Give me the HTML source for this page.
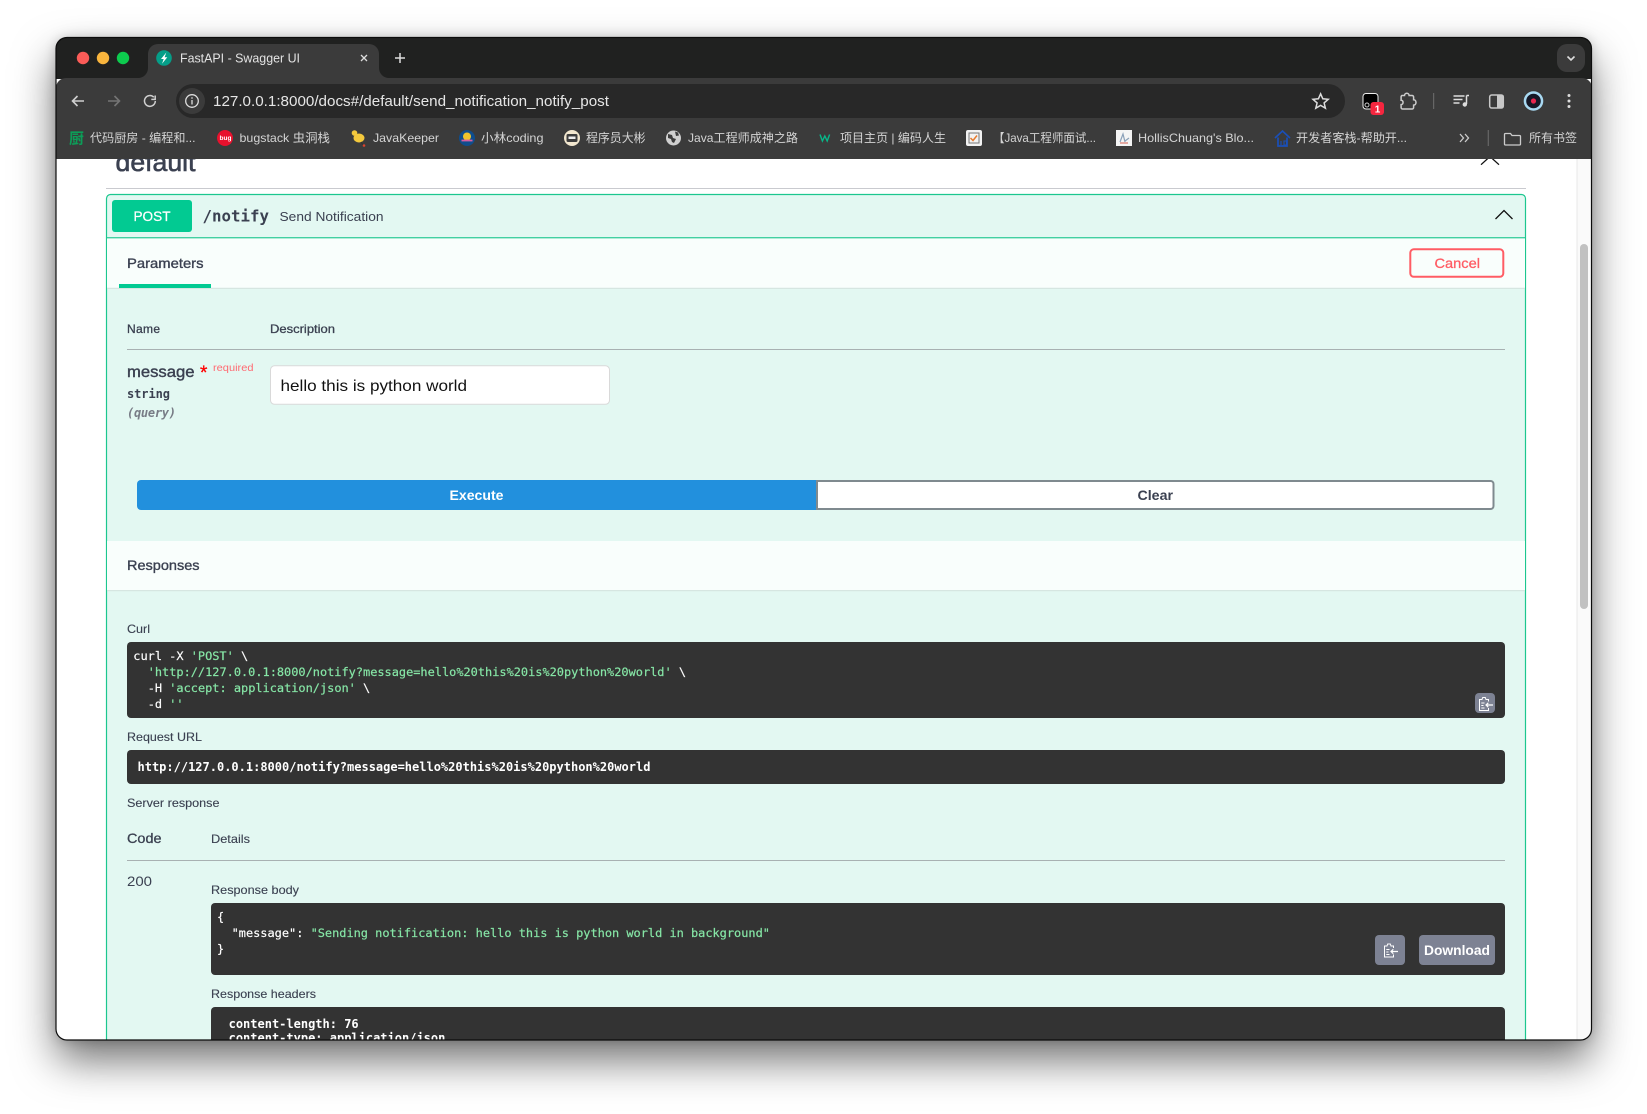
<!DOCTYPE html>
<html lang="en"><head><meta charset="utf-8"><title>FastAPI - Swagger UI</title>
<style>
html,body{margin:0;padding:0;background:#fff;width:1647px;height:1114px;overflow:hidden}
#sh{position:absolute;left:56px;top:38px;width:1535px;height:1002px;border-radius:11px;box-shadow:0 20px 42px rgba(0,0,0,.56),0 0 12px rgba(0,0,0,.2)}
svg{position:absolute;left:0;top:0}
text{white-space:pre;font-family:"Liberation Sans","Noto Sans CJK SC",sans-serif}
.m{font-family:"DejaVu Sans Mono","Liberation Mono",monospace;font-size:12px}
.n{font-size:11.93px;stroke-width:.18}
.n .w,.n.w{stroke:#fff}.n .g{stroke:#86e6a6}
.bm{font-size:12px;fill:#d4d4d4}
.l{font-size:12px;fill:#3b4151;stroke:#3b4151;stroke-width:.12}
.w{fill:#fff}.g{fill:#86e6a6}
.b{font-weight:bold}
</style></head><body>
<div id="sh"></div>
<svg width="1647" height="1114" viewBox="0 0 1647 1114" xmlns="http://www.w3.org/2000/svg">
<defs><clipPath id="c"><rect x="56" y="37.5" width="1535.5" height="1002.5" rx="11"/></clipPath></defs>
<g clip-path="url(#c)">
<!-- page -->
<rect x="56" y="37" width="1536" height="1003" fill="#fff"/>
<rect x="1577" y="159" width="15" height="881" fill="#fafafa"/>
<rect x="1576.5" y="159" width="1" height="881" fill="#e8e8e8"/>
<rect x="1580" y="244" width="8" height="365" rx="4" fill="#c1c1c1"/>
<text x="115.5" y="171.2" font-size="26" fill="#3b4151" stroke="#3b4151" stroke-width=".6" textLength="80" lengthAdjust="spacingAndGlyphs">default</text>
<path d="M1481 164.7L1490 156.5L1499 164.7" fill="none" stroke="#111" stroke-width="1.3"/>
<rect x="106" y="188" width="1420" height="1" fill="#c9cacf"/>
<!-- opblock -->
<rect x="106.5" y="194.5" width="1419" height="880" rx="4" fill="#e3f8f2" stroke="#1cc78f" stroke-width="1.2"/>
<rect x="107" y="237.2" width="1418" height="1.2" fill="#1cc78f"/>
<rect x="112" y="200" width="80" height="32" rx="3" fill="#02ca92"/>
<text x="133.5" y="221" font-size="14" fill="#fff" stroke="#fff" stroke-width=".25" textLength="37" lengthAdjust="spacingAndGlyphs">POST</text>
<text x="202.5" y="221.5" font-size="16" class="m b" style="font-size:16px" fill="#3b4151" textLength="66.5" lengthAdjust="spacingAndGlyphs">/notify</text>
<text x="279.5" y="221" font-size="13" fill="#3b4151" textLength="104" lengthAdjust="spacingAndGlyphs">Send Notification</text>
<path d="M1495.5 219L1504 210.5L1512.5 219" fill="none" stroke="#111" stroke-width="1.3"/>
<!-- params header -->
<rect x="107" y="238.4" width="1418" height="49.4" fill="#f9fefc"/>
<rect x="107" y="287.8" width="1418" height="1.2" fill="#d6e6e1"/>
<text x="127" y="268" font-size="14" fill="#3b4151" stroke="#3b4151" stroke-width=".35" textLength="76.5" lengthAdjust="spacingAndGlyphs">Parameters</text>
<rect x="119" y="284" width="92" height="4" fill="#02ca92"/>
<rect x="1410.3" y="249.3" width="93" height="27.5" rx="3.5" fill="#f9fefc" stroke="#ff5c64" stroke-width="2"/>
<text x="1434.5" y="268" font-size="14" fill="#ff5c64" stroke="#ff5c64" stroke-width=".3" textLength="45.5" lengthAdjust="spacingAndGlyphs">Cancel</text>
<!-- table -->
<text x="127" y="333" class="l" style="stroke-width:.3" textLength="33">Name</text>
<text x="270" y="333" class="l" style="stroke-width:.3" textLength="65" lengthAdjust="spacingAndGlyphs">Description</text>
<rect x="127" y="349" width="1378" height="1" fill="#a8b1b2"/>
<text x="127" y="377" font-size="16" fill="#3b4151" stroke="#3b4151" stroke-width=".4" textLength="67.5" lengthAdjust="spacingAndGlyphs">message</text>
<text x="200" y="379" font-size="19" fill="#f00" stroke="#f00" stroke-width=".3">*</text>
<text x="213" y="371" font-size="10" fill="#ff6a72" textLength="40.5" lengthAdjust="spacingAndGlyphs">required</text>
<text x="127" y="398" class="m b" fill="#3b4151" textLength="43">string</text>
<text x="127" y="417" class="m b" fill="#787c86" textLength="49" style="font-style:italic">(query)</text>
<rect x="270.5" y="365.8" width="339" height="38.5" rx="4" fill="#fff" stroke="#d9d9d9"/>
<text x="280.5" y="391" font-size="16" fill="#111" textLength="186.5" lengthAdjust="spacingAndGlyphs">hello this is python world</text>
<!-- buttons -->
<path d="M141 480H817V510H141a4 4 0 0 1-4-4V484a4 4 0 0 1 4-4z" fill="#2290dd"/>
<path d="M817 481H1490.5a3 3 0 0 1 3 3V506a3 3 0 0 1-3 3H817z" fill="#fff" stroke="#7f8a8f" stroke-width="2"/>
<text x="449.5" y="500" font-size="14" class="w b" textLength="54" lengthAdjust="spacingAndGlyphs">Execute</text>
<text x="1137.5" y="500" font-size="14" fill="#3b4151" class="b" textLength="35.5" lengthAdjust="spacingAndGlyphs">Clear</text>
<!-- responses -->
<rect x="107" y="541" width="1418" height="49" fill="#f9fefc"/>
<rect x="107" y="590" width="1418" height="1.2" fill="#d6e6e1"/>
<text x="127" y="570" font-size="14" fill="#3b4151" stroke="#3b4151" stroke-width=".35" textLength="72.5" lengthAdjust="spacingAndGlyphs">Responses</text>
<text x="127" y="633" class="l" textLength="23" lengthAdjust="spacingAndGlyphs">Curl</text>
<rect x="127" y="642" width="1378" height="76" rx="4" fill="#333"/>
<text class="m n" y="660"><tspan x="133.3" class="w">curl -X </tspan><tspan class="g">'POST'</tspan><tspan class="w"> \</tspan></text>
<text class="m n" y="676"><tspan x="147.7" class="g">'http://127.0.0.1:8000/notify?message=hello%20this%20is%20python%20world'</tspan><tspan class="w"> \</tspan></text>
<text class="m n" y="692"><tspan x="147.7" class="w">-H </tspan><tspan class="g">'accept: application/json'</tspan><tspan class="w"> \</tspan></text>
<text class="m n" y="708"><tspan x="147.7" class="w">-d </tspan><tspan class="g">''</tspan></text>
<rect x="1475" y="693" width="20" height="20" rx="4" fill="#7d8293"/>
<g transform="translate(1478.5,696.5)" fill="none" stroke="#fff" stroke-width="1"><path d="M10 5V3H7.5L6.8 1H4.2L3.5 3H1V14H10V11.5"/><path d="M2.8 6.5H6M2.8 9H5M2.8 11.5H6"/><path d="M14.5 8.5H7.5M9.8 6.3L7.5 8.5L9.8 10.7" stroke-width="1.2"/></g>
<text x="127" y="741" class="l" textLength="75" lengthAdjust="spacingAndGlyphs">Request URL</text>
<rect x="127" y="750" width="1378" height="34" rx="4" fill="#333"/>
<text x="137.5" y="771" class="m b w">http://127.0.0.1:8000/notify?message=hello%20this%20is%20python%20world</text>
<text x="127" y="807" class="l" textLength="92.5" lengthAdjust="spacingAndGlyphs">Server response</text>
<text x="127" y="843" font-size="14" fill="#3b4151" stroke="#3b4151" stroke-width=".3" textLength="34.5" lengthAdjust="spacingAndGlyphs">Code</text>
<text x="211" y="843" class="l" textLength="39" lengthAdjust="spacingAndGlyphs">Details</text>
<rect x="127" y="860" width="1378" height="1" fill="#a8b1b2"/>
<text x="127" y="886" font-size="14" fill="#3b4151" textLength="25" lengthAdjust="spacingAndGlyphs">200</text>
<text x="211" y="894" class="l" textLength="88" lengthAdjust="spacingAndGlyphs">Response body</text>
<rect x="211" y="903" width="1294" height="72" rx="4" fill="#333"/>
<text x="217" y="921" class="m n w">{</text>
<text class="m n" y="937"><tspan x="231.6" class="w">"message": </tspan><tspan class="g">"Sending notification: hello this is python world in background"</tspan></text>
<text x="217" y="953" class="m n w">}</text>
<rect x="1375" y="935" width="30" height="30" rx="4" fill="#7d8293"/>
<g transform="translate(1383.5,943)" fill="none" stroke="#fff" stroke-width="1"><path d="M10 5V3H7.5L6.8 1H4.2L3.5 3H1V14H10V11.5"/><path d="M2.8 6.5H6M2.8 9H5M2.8 11.5H6"/><path d="M14.5 8.5H7.5M9.8 6.3L7.5 8.5L9.8 10.7" stroke-width="1.2"/></g>
<rect x="1419" y="935" width="76" height="30" rx="4" fill="#7d8293"/>
<text x="1424" y="955" font-size="14" class="w b" textLength="66" lengthAdjust="spacingAndGlyphs">Download</text>
<text x="211" y="998" class="l" textLength="105" lengthAdjust="spacingAndGlyphs">Response headers</text>
<rect x="211" y="1007" width="1294" height="60" rx="4" fill="#333"/>
<text x="228.6" y="1028" class="m b w">content-length: 76</text>
<text x="228.6" y="1042" class="m b w">content-type: application/json</text>

<!-- tab strip -->
<rect x="56" y="37" width="1536" height="42" fill="#202120"/>
<path d="M138 78a10 10 0 0 0 10-10V54a10 10 0 0 1 10-10H369a10 10 0 0 1 10 10V68a10 10 0 0 0 10 10z" fill="#3b3b3b"/>
<circle cx="83" cy="58" r="6.2" fill="#fb5c58"/><circle cx="103" cy="58" r="6.2" fill="#f9b53d"/><circle cx="123" cy="58" r="6.2" fill="#0dcb4e"/>
<circle cx="164" cy="58" r="7.8" fill="#059e88"/><path d="M166.3 52.5L161 59h2.7l-1.7 4.8 5.3-6.6h-2.7z" fill="#fff"/>
<text x="180" y="62.5" font-size="13" fill="#e3e3e3" textLength="120" lengthAdjust="spacingAndGlyphs">FastAPI - Swagger UI</text>
<path d="M361 55l6 6M367 55l-6 6" stroke="#ddd" stroke-width="1.3"/>
<path d="M400 53v10M395 58h10" stroke="#ddd" stroke-width="1.5"/>
<rect x="1557" y="44" width="28" height="28" rx="10" fill="#3b3b3b"/>
<path d="M1567.5 56.5l3.5 3.5 3.5-3.5" fill="none" stroke="#ddd" stroke-width="1.6"/>
<!-- toolbar -->
<path d="M56 159V88a10 10 0 0 1 10-10H1582a10 10 0 0 1 10 10V159z" fill="#3b3b3b"/>
<rect x="176" y="84" width="1169" height="34" rx="17" fill="#282828"/>
<path d="M84 101H72.5M77.5 96l-5 5 5 5" fill="none" stroke="#cfcfcf" stroke-width="1.6"/>
<path d="M108 101H119.5M114.5 96l5 5-5 5" fill="none" stroke="#747474" stroke-width="1.6"/>
<path d="M155.3 101a5.4 5.4 0 1 1-1.5-3.8M155.2 95.5v3.9h-3.9" fill="none" stroke="#cfcfcf" stroke-width="1.5"/>
<circle cx="192" cy="101" r="13" fill="#3b3b3b"/>
<circle cx="192" cy="101" r="6.3" fill="none" stroke="#ddd" stroke-width="1.3"/>
<path d="M192 100v4.5M192 97.3v1.5" stroke="#ddd" stroke-width="1.3"/>
<text x="213" y="106" font-size="14.5" fill="#e6e6e6" textLength="396" lengthAdjust="spacingAndGlyphs">127.0.0.1:8000/docs#/default/send_notification_notify_post</text>
<g transform="translate(-1,0)">
<path d="M1321.6 93.8l2.2 5 5.4.5-4.1 3.6 1.3 5.3-4.8-2.8-4.8 2.8 1.3-5.3-4.1-3.6 5.4-.5z" fill="none" stroke="#ddd" stroke-width="1.5"/>
<rect x="1364" y="93.5" width="15" height="15.5" rx="3" fill="#000" stroke="#eee" stroke-width="1"/>
<circle cx="1368" cy="105" r="2" fill="none" stroke="#ccc"/>
<rect x="1371.5" y="102" width="13.5" height="13" rx="3" fill="#f5263f"/>
<text x="1375.7" y="112.5" font-size="10" class="w b">1</text>
<path d="M1402.5 95.5h3a2.3 2.3 0 0 1 4.6 0h3a1.5 1.5 0 0 1 1.5 1.5v2.8c3.2 0 3.2 5.3 0 5.3v2.4a1.5 1.5 0 0 1-1.5 1.5h-9.5a1.5 1.5 0 0 1-1.5-1.5v-2.9c2.6 0 2.6-4.4 0-4.4V97a1.5 1.5 0 0 1 1-1.5z" fill="none" stroke="#ccc" stroke-width="1.5"/>
<rect x="1434" y="93" width="1.2" height="16" fill="#666"/>
<path d="M1454.5 96h11M1454.5 99.5h9M1454.5 103h6" stroke="#ddd" stroke-width="1.4"/>
<path d="M1467.5 95.5H1470M1467.5 95.5V104" stroke="#ddd" stroke-width="1.5" fill="none"/><circle cx="1465.8" cy="104.5" r="2.2" fill="#ddd"/>
<rect x="1490.7" y="95" width="13.6" height="13" rx="2" fill="none" stroke="#c8c8c8" stroke-width="1.5"/><rect x="1498" y="95" width="6.5" height="13" fill="#c8c8c8"/>
<circle cx="1534.5" cy="101" r="9.8" fill="#a8d9f2"/><circle cx="1534.5" cy="101" r="7.3" fill="#151827"/><circle cx="1534.5" cy="101" r="2.6" fill="#e8264f"/>
</g>
<circle cx="1569" cy="95.5" r="1.5" fill="#ddd"/><circle cx="1569" cy="101" r="1.5" fill="#ddd"/><circle cx="1569" cy="106.5" r="1.5" fill="#ddd"/>
<!-- bookmarks -->
<text x="69" y="143.5" font-size="15" fill="#0c9d58" class="b">厨</text>
<text x="90" y="142" class="bm" textLength="105.5" lengthAdjust="spacingAndGlyphs">代码厨房 - 编程和...</text>
<circle cx="225" cy="138" r="8" fill="#e8112d"/><text x="219.5" y="140" font-size="6.5" class="w b">bug</text>
<text x="239.5" y="142" class="bm" textLength="90.5" lengthAdjust="spacingAndGlyphs">bugstack 虫洞栈</text>
<ellipse cx="359" cy="138" rx="5.5" ry="4.5" fill="#f4c93d"/><circle cx="354.5" cy="133" r="2.8" fill="#f4c93d"/><path d="M361 142l2 3" stroke="#333" stroke-width="1.2"/><circle cx="364" cy="145.5" r="1.3" fill="#d9442f"/>
<text x="373" y="142" class="bm" textLength="66" lengthAdjust="spacingAndGlyphs">JavaKeeper</text>
<circle cx="467" cy="138" r="8" fill="#0f4d8c"/><circle cx="467" cy="136.5" r="4" fill="#eec32d"/><path d="M461.5 140.5h11" stroke="#d65fa0" stroke-width="1.8"/>
<text x="481" y="142" class="bm" textLength="62.5" lengthAdjust="spacingAndGlyphs">小林coding</text>
<circle cx="572" cy="138" r="8" fill="#f2e7cf"/><rect x="566.5" y="134" width="11" height="8" rx="1.5" fill="#3d3d3d"/><rect x="568.5" y="136.5" width="7" height="2.5" fill="#eee"/>
<text x="586" y="142" class="bm" textLength="59.5" lengthAdjust="spacingAndGlyphs">程序员大彬</text>
<circle cx="673.5" cy="138" r="7.5" fill="#cfcfcf"/><path d="M668 134l4 1 1 3 3 1-2 4-2-1-1-3-3-1zM675 131.5l3 1 1 3-3 .5z" fill="#3b3b3b"/>
<text x="688" y="142" class="bm" textLength="110" lengthAdjust="spacingAndGlyphs">Java工程师成神之路</text>
<path d="M820 134.5l2.4 6.5 2.4-5 2.4 5 2.4-6.5" fill="none" stroke="#07b88a" stroke-width="1.4"/>
<text x="840" y="142" class="bm" textLength="106" lengthAdjust="spacingAndGlyphs">项目主页 | 编码人生</text>
<rect x="966" y="130" width="16" height="16" rx="2" fill="#f2f2f2"/><rect x="969" y="133" width="10" height="10" fill="none" stroke="#777"/><path d="M970.5 138l2.5 2.5 4-5" fill="none" stroke="#e67a2e" stroke-width="1.5"/>
<text x="993" y="142" class="bm" textLength="103" lengthAdjust="spacingAndGlyphs">【Java工程师面试...</text>
<rect x="1116" y="130" width="16" height="16" fill="#f4f4f4"/><path d="M1120 142l3-8 2 8M1125 141l4-3" fill="none" stroke="#8aa0b8" stroke-width="1.2"/><path d="M1120 143h8" stroke="#d9776b" stroke-width="1.2"/>
<text x="1138" y="142" class="bm" textLength="116" lengthAdjust="spacingAndGlyphs">HollisChuang's Blo...</text>
<path d="M1275 138l7.5-7 7.5 7M1278 137.5V146h9v-8.5" fill="none" stroke="#1a4fb8" stroke-width="1.7"/><path d="M1281 141v4M1284 141h2.5v4H1284z" fill="none" stroke="#1a4fb8" stroke-width="1.1"/>
<text x="1296" y="142" class="bm" textLength="111" lengthAdjust="spacingAndGlyphs">开发者客栈-帮助开...</text>
<g transform="translate(-1,0)">
<path d="M1461 134l3.5 4-3.5 4M1466 134l3.5 4-3.5 4" fill="none" stroke="#ccc" stroke-width="1.3"/>
<rect x="1488.7" y="130" width="1.2" height="16" fill="#666"/>
<path d="M1506.5 133.5h5l1.5 2h7.5a1 1 0 0 1 1 1v7.5a1 1 0 0 1-1 1h-14a1 1 0 0 1-1-1v-9.5a1 1 0 0 1 1-1z" fill="none" stroke="#ccc" stroke-width="1.3"/>
<text x="1530" y="142" class="bm" textLength="48" lengthAdjust="spacingAndGlyphs">所有书签</text>
</g>
</g>
<rect x="56" y="37.5" width="1535.5" height="1002.5" rx="11" fill="none" stroke="#0c0c0c" stroke-width="1.2"/>
</svg>
</body></html>
